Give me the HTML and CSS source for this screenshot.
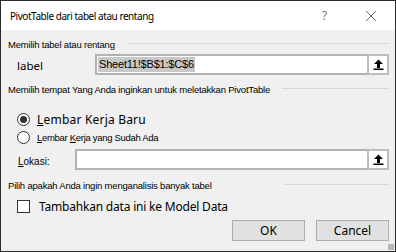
FILE: index.html
```html
<!DOCTYPE html>
<html lang="id">
<head>
    <meta charset="UTF-8">
    <title>PivotTable</title>
    <link rel="stylesheet" href="styles.css">
</head>
<body>
<div class="dialog">
    <div class="titlebar">
        <span class="title">PivotTable dari tabel atau rentang</span>
        <span class="help">?</span>
        <span class="close">
            <svg width="12" height="12" viewBox="0 0 12 12"><path d="M1 1L11 11M11 1L1 11" stroke="#666" stroke-width="1"/></svg>
        </span>
    </div>
    <div class="content">
        <div class="group-title first"><span>Memilih tabel atau rentang</span><i class="line"></i></div>
        <div class="row source">
            <span class="big-label">label</span>
            <div class="refedit wide">
                <div class="ref-input"><span class="selected">Sheet11!$B$1:$C$6</span></div>
                <button class="ref-btn"><svg width="11" height="11" viewBox="0 0 11 11"><path d="M5.5 0.5L1 5h3v4h3V5h3z" fill="#000"/><rect x="0.5" y="9.5" width="10" height="1.5" fill="#000"/></svg></button>
            </div>
        </div>

        <div class="group-title second"><span>Memilih tempat Yang Anda inginkan untuk meletakkan PivotTable</span><i class="line"></i></div>
        <label class="radio big"><span class="circle checked"></span><span><u>L</u>embar Kerja Baru</span></label>
        <label class="radio small"><span class="circle"></span><span><u>L</u>embar <u>K</u>erja yang Sudah Ada</span></label>
        <div class="row location">
            <span class="small-label"><u>L</u>okasi:</span>
            <div class="refedit narrow">
                <div class="ref-input"></div>
                <button class="ref-btn"><svg width="11" height="11" viewBox="0 0 11 11"><path d="M5.5 0.5L1 5h3v4h3V5h3z" fill="#000"/><rect x="0.5" y="9.5" width="10" height="1.5" fill="#000"/></svg></button>
            </div>
        </div>

        <div class="group-title third"><span>Pilih apakah Anda ingin menganalisis banyak tabel</span><i class="line"></i></div>
        <label class="check"><span class="box"></span><span>Tambahkan data ini ke Model Data</span></label>

        <div class="buttons">
            <button class="btn">OK</button>
            <button class="btn">Cancel</button>
        </div>
    </div>
    <div class="grip"></div>
</div>
</body>
</html>
```

FILE: styles.css
```css
body {
    margin: 0;
    font-family: "Noto Sans", "Open Sans", sans-serif;
    color: #000;
}

.dialog {
    position: relative;
    width: 396px;
    height: 252px;
    box-sizing: border-box;
    border: 1px solid #2b2b2b;
    display: flex;
    flex-direction: column;
    background: #f0f0f0;
}

.titlebar {
    height: 29px;
    background: #fff;
    display: flex;
    align-items: center;
    padding-left: 9px;
}

.title {
    font-size: 10px;
    letter-spacing: -0.45px;
    flex: 1;
}

.help {
    font-size: 12px;
    color: #777;
    width: 43px;
}

.close {
    width: 30px;
    display: flex;
}

.content {
    flex: 1;
    padding: 0 6px 0 7px;
    display: flex;
    flex-direction: column;
}

.group-title {
    display: flex;
    align-items: center;
    font-family: "Liberation Sans", sans-serif;
    font-size: 9.5px;
    letter-spacing: -0.2px;
    height: 12px;
}

.group-title span {
    flex: none;
}

.group-title .line {
    flex: 1;
    height: 1px;
    background: #d7d7d7;
    margin-top: -2px;
}

.group-title.first { margin-top: 8px; }
.group-title.first span { width: 121px; }
.group-title.second { margin-top: 8px; }
.group-title.second span { width: 274px; }
.group-title.third { margin-top: 9px; }
.group-title.third span { width: 276px; }

.row {
    display: flex;
    align-items: center;
}

.source {
    margin-top: 3px;
    height: 22px;
}

.big-label {
    font-size: 11.5px;
    width: 78px;
    padding-left: 9px;
    padding-top: 3px;
}

.small-label {
    font-family: "Liberation Sans", sans-serif;
    font-size: 10px;
    width: 57px;
    padding-left: 10px;
    padding-top: 4px;
}

.refedit {
    flex: 1;
    display: flex;
    height: 21px;
}

.ref-input {
    flex: 1;
    background: #fff;
    border: 2px solid #b2b2b2;
    border-right: none;
    display: flex;
    align-items: center;
    padding-left: 1px;
}

.selected {
    background: #c8c8c8;
    font-family: "Liberation Sans", sans-serif;
    font-size: 11px;
    letter-spacing: -0.2px;
    line-height: 15px;
    padding: 0 1px;
}

.ref-btn {
    width: 22px;
    height: 21px;
    border: 2px solid #bdbdbd;
    background: #fff;
    padding: 0;
    display: flex;
    align-items: center;
    justify-content: center;
}

.radio {
    display: flex;
    align-items: center;
    gap: 7px;
    padding-left: 9px;
}

.radio.big {
    font-size: 12px;
    letter-spacing: 0.2px;
    margin-top: 16px;
    height: 16px;
}

.radio.small {
    font-family: "Liberation Sans", sans-serif;
    font-size: 9.5px;
    letter-spacing: -0.3px;
    margin-top: 2px;
    height: 16px;
}

.circle {
    width: 11px;
    height: 11px;
    border: 1px solid #333;
    border-radius: 50%;
    background: #fff;
    display: flex;
    align-items: center;
    justify-content: center;
}

.circle.checked::after {
    content: "";
    width: 7px;
    height: 7px;
    border-radius: 50%;
    background: #333;
}

.location {
    margin-top: 4px;
}

.check {
    display: flex;
    align-items: center;
    gap: 9px;
    padding-left: 9px;
    margin-top: 7px;
    font-size: 12px;
    letter-spacing: -0.2px;
}

.box {
    width: 11px;
    height: 11px;
    border: 1px solid #333;
    background: #fff;
}

.buttons {
    display: flex;
    justify-content: flex-end;
    gap: 11px;
    margin-top: 5px;
}

.btn {
    width: 73px;
    height: 21px;
    background: #e1e1e1;
    border: 1px solid #adadad;
    font-family: "Noto Sans", sans-serif;
    font-size: 12px;
    padding: 0;
}

.grip {
    position: absolute;
    right: 1px;
    bottom: 1px;
    width: 6px;
    height: 6px;
    background-image: radial-gradient(#b8b8b8 0.8px, transparent 0.9px);
    background-size: 2px 2px;
}
```
